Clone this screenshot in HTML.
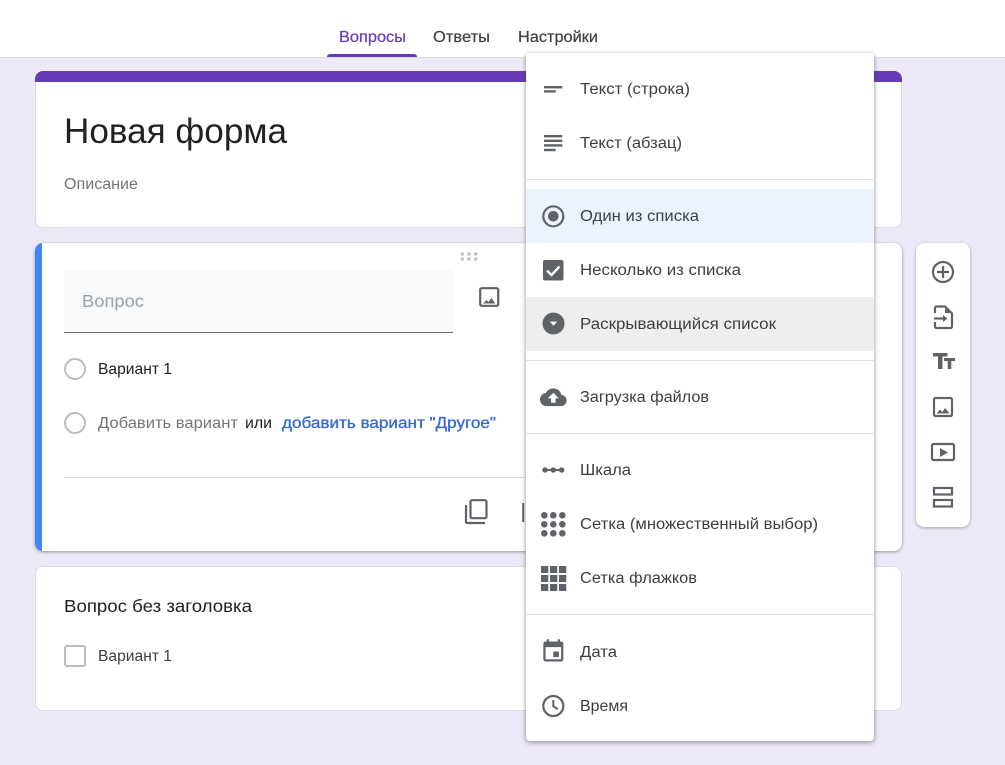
<!DOCTYPE html>
<html lang="ru"><head><meta charset="utf-8"><title>Новая форма</title>
<style>
html,body{margin:0;padding:0;width:1005px;height:765px;overflow:hidden;background:#eee9f8}
body{position:relative;font-family:"Liberation Sans","Noto Sans CJK SC",sans-serif}
.a{position:absolute;box-sizing:border-box}
svg{position:absolute;left:0;top:0}
text{font-family:"Liberation Sans","Noto Sans CJK SC",sans-serif;white-space:pre}
.m text{font-size:15.5px;fill:#3c4043}
</style></head><body>
<div class="a" style="left:0;top:0;width:1005px;height:58px;background:#fff;border-bottom:1px solid #dadce0"></div>
<div class="a" style="left:327px;top:54px;width:90px;height:3px;background:#673ab7;border-radius:3px 3px 0 0"></div>
<div class="a" style="left:35px;top:71px;width:867px;height:157px;background:#fff;border:1px solid #dadce0;border-radius:8px"></div>
<div class="a" style="left:35px;top:71px;width:867px;height:11px;background:#673ab7;border-radius:8px 8px 0 0"></div>
<div class="a" style="left:35px;top:243px;width:867px;height:308px;background:#fff;border-radius:8px;overflow:hidden;box-shadow:0 1px 3px rgba(60,64,67,.55)"><div style="width:7px;height:100%;background:#4285f4"></div></div>
<div class="a" style="left:35px;top:566px;width:867px;height:145px;background:#fff;border:1px solid #dadce0;border-radius:8px"></div>
<div class="a" style="left:916px;top:243px;width:54px;height:284px;background:#fff;border-radius:8px;box-shadow:0 1px 3px rgba(60,64,67,.45)"></div>
<div class="a" style="left:64px;top:270px;width:389px;height:63px;background:#f8f9fa;border-bottom:1px solid #70757a;border-radius:4px 4px 0 0"></div>

<svg width="1005" height="765" viewBox="0 0 1005 765">
<g font-size="15.5">
<text x="339" y="42" textLength="67" lengthAdjust="spacingAndGlyphs" fill="#673ab7" stroke="#673ab7" stroke-width=".2">Вопросы</text>
<text x="433" y="42" textLength="57" lengthAdjust="spacingAndGlyphs" fill="#3c4043" stroke="#3c4043" stroke-width=".2">Ответы</text>
<text x="518" y="42" textLength="80" lengthAdjust="spacingAndGlyphs" fill="#3c4043" stroke="#3c4043" stroke-width=".2">Настройки</text>
</g>
<text x="64" y="143" font-size="35.5" textLength="223" lengthAdjust="spacingAndGlyphs" fill="#202124">Новая форма</text>
<text x="64" y="189" font-size="15.5" textLength="74" lengthAdjust="spacingAndGlyphs" fill="#70757a">Описание</text>
<text x="82" y="307" font-size="17.5" textLength="62" lengthAdjust="spacingAndGlyphs" fill="#9aa0a6">Вопрос</text>
<g fill="#bdc1c6"><circle cx="462.3" cy="254" r="1.8"/><circle cx="469" cy="254" r="1.8"/><circle cx="475.7" cy="254" r="1.8"/><circle cx="462.3" cy="259" r="1.8"/><circle cx="469" cy="259" r="1.8"/><circle cx="475.7" cy="259" r="1.8"/></g>
<rect x="480.200" y="288.200" width="18" height="17.600" rx="1.5" fill="none" stroke="#5f6368" stroke-width="2.200"/>
<path d="M483 303.500l3.500-3.500 2 2 3-4 3.700 5.500z" fill="#5f6368"/>
<circle cx="75" cy="369" r="10" fill="none" stroke="#bdbdbd" stroke-width="2"/>
<circle cx="75" cy="423" r="10" fill="none" stroke="#bdbdbd" stroke-width="2"/>
<text x="98" y="374" font-size="15.5" textLength="74" lengthAdjust="spacingAndGlyphs" fill="#202124">Вариант 1</text>
<text x="98" y="428" font-size="15.5" textLength="140" lengthAdjust="spacingAndGlyphs" fill="#70757a">Добавить вариант</text>
<text x="245" y="428" font-size="15.5" textLength="27" lengthAdjust="spacingAndGlyphs" fill="#202124">или</text>
<text x="282" y="428" font-size="15.5" textLength="214" lengthAdjust="spacingAndGlyphs" fill="#3367d6" stroke="#3367d6" stroke-width=".3">добавить вариант "Другое"</text>
<rect x="64" y="477" width="462" height="1" fill="#dadce0"/>
<rect x="470.500" y="500.200" width="16" height="18" rx="1.500" fill="none" stroke="#5f6368" stroke-width="2.200"/>
<path d="M466 505v17a1.500 1.500 0 0 0 1.500 1h17.500" fill="none" stroke="#5f6368" stroke-width="2.200"/>
<path d="M523.200 503v19" fill="none" stroke="#5f6368" stroke-width="2"/>
<text x="64" y="612" font-size="17.5" textLength="188" lengthAdjust="spacingAndGlyphs" fill="#202124">Вопрос без заголовка</text>
<rect x="65" y="646" width="20" height="20" rx="2" fill="none" stroke="#bdbdbd" stroke-width="2"/>
<text x="98" y="661" font-size="15.5" textLength="74" lengthAdjust="spacingAndGlyphs" fill="#3c4043">Вариант 1</text>

<g fill="none" stroke="#5f6368" stroke-width="2.200">
<circle cx="943" cy="272" r="10"/><path d="M943 266v12M937 272h12"/>
<path d="M935 313v-5a1.500 1.500 0 0 1 1.500-1.500h8.500l7 7v13a1.500 1.500 0 0 1-1.500 1.500h-14a1.500 1.500 0 0 1-1.500-1.500v-4.500"/>
<path d="M934 318.500h11"/>
<rect x="934" y="398" width="18" height="18" rx="1.500"/>
<rect x="932" y="444" width="22" height="16" rx="1.500"/>
<rect x="934" y="488" width="18" height="6.500"/><rect x="934" y="500" width="18" height="6.500"/>
</g>
<g fill="#5f6368">
<path d="M945 306v7h7zM943 315l4.500 3.500-4.500 3.500z"/>
<path d="M933 353h14.500v3.500h-5v12.500h-4.500v-12.500h-5z"/>
<path d="M944 358h11v3h-3.700v8h-3.600v-8h-3.700z"/>
<path d="M936.500 413.500l3.500-4 2.500 2.500 2.500-4 4.500 5.500z"/>
<path d="M940 448l8 4.500-8 4.500z"/>
</g>
</svg>

<div class="a" style="left:526px;top:53px;width:348px;height:688px;background:#fff;border-radius:4px;box-shadow:0 1px 4px rgba(60,64,67,.4),0 2px 6px rgba(60,64,67,.2)"></div>
<svg class="m" width="1005" height="765" viewBox="0 0 1005 765">
<rect x="526" y="189" width="348" height="54" fill="#edf3fe"/>
<rect x="526" y="297" width="348" height="54" fill="#eeeeee"/>
<g fill="#e0e0e0"><rect x="526" y="179" width="348" height="1"/><rect x="526" y="360" width="348" height="1"/><rect x="526" y="433" width="348" height="1"/><rect x="526" y="614" width="348" height="1"/></g>
<text x="580" y="94" textLength="110" lengthAdjust="spacingAndGlyphs">Текст (строка)</text>
<text x="580" y="148" textLength="102" lengthAdjust="spacingAndGlyphs">Текст (абзац)</text>
<text x="580" y="221" textLength="119" lengthAdjust="spacingAndGlyphs">Один из списка</text>
<text x="580" y="275" textLength="161" lengthAdjust="spacingAndGlyphs">Несколько из списка</text>
<text x="580" y="329" textLength="196" lengthAdjust="spacingAndGlyphs">Раскрывающийся список</text>
<text x="580" y="402" textLength="129" lengthAdjust="spacingAndGlyphs">Загрузка файлов</text>
<text x="580" y="475" textLength="51" lengthAdjust="spacingAndGlyphs">Шкала</text>
<text x="580" y="529" textLength="238" lengthAdjust="spacingAndGlyphs">Сетка (множественный выбор)</text>
<text x="580" y="583" textLength="117" lengthAdjust="spacingAndGlyphs">Сетка флажков</text>
<text x="580" y="657" textLength="37" lengthAdjust="spacingAndGlyphs">Дата</text>
<text x="580" y="711" textLength="48" lengthAdjust="spacingAndGlyphs">Время</text>
<g fill="#5f6368">
<rect x="544" y="86" width="18.300" height="2.400"/><rect x="544" y="90.200" width="11.700" height="2.400"/>
<rect x="544" y="135" width="18.300" height="2.400"/><rect x="544" y="139.600" width="18.300" height="2.400"/><rect x="544" y="144.200" width="18.300" height="2.400"/><rect x="544" y="148.800" width="11.700" height="2.400"/>
<circle cx="553.300" cy="216.300" r="5.300"/>
<rect x="543" y="260" width="20.500" height="20.500" rx="2"/>
<circle cx="553.500" cy="323.500" r="11"/>
<path transform="translate(540 383.900) scale(1.110)" d="M19.350 10.040C18.670 6.590 15.640 4 12 4 9.110 4 6.600 5.640 5.350 8.040 2.340 8.360 0 10.910 0 14c0 3.310 2.690 6 6 6h13c2.760 0 5-2.240 5-5 0-2.640-2.050-4.780-4.650-4.960zM14 13v4h-4v-4H7l5-5 5 5h-3z"/>
<rect x="545" y="469" width="17" height="2"/><circle cx="545" cy="470" r="2.700"/><circle cx="553.300" cy="470" r="2.700"/><circle cx="561.700" cy="470" r="2.700"/>
<g><circle cx="544.300" cy="515.300" r="3.300"/><circle cx="553.300" cy="515.300" r="3.300"/><circle cx="562.300" cy="515.300" r="3.300"/><circle cx="544.300" cy="524.300" r="3.300"/><circle cx="553.300" cy="524.300" r="3.300"/><circle cx="562.300" cy="524.300" r="3.300"/><circle cx="544.300" cy="533.300" r="3.300"/><circle cx="553.300" cy="533.300" r="3.300"/><circle cx="562.300" cy="533.300" r="3.300"/></g>
<g><rect x="541" y="566" width="7.300" height="7"/><rect x="550" y="566" width="7.300" height="7"/><rect x="559" y="566" width="7.300" height="7"/><rect x="541" y="575" width="7.300" height="7"/><rect x="550" y="575" width="7.300" height="7"/><rect x="559" y="575" width="7.300" height="7"/><rect x="541" y="584" width="7.300" height="7"/><rect x="550" y="584" width="7.300" height="7"/><rect x="559" y="584" width="7.300" height="7"/></g>
<path transform="translate(540 638.200) scale(1.110)" d="M17 12h-5v5h5v-5zM16 1v2H8V1H6v2H5c-1.110 0-1.990.900-1.990 2L3 19c0 1.100.890 2 2 2h14c1.100 0 2-.900 2-2V5c0-1.100-.900-2-2-2h-1V1h-2zm3 18H5V8h14v11z"/>
</g>
<circle cx="553.300" cy="216.300" r="10" fill="none" stroke="#5f6368" stroke-width="2.200"/>
<path d="M547 270.500l4.500 4.500 8-8.500" fill="none" stroke="#fff" stroke-width="2.400"/>
<path d="M549.800 321.600h7.400l-3.700 4.200z" fill="#fff"/>
<circle cx="553.300" cy="706" r="10" fill="none" stroke="#5f6368" stroke-width="2.200"/>
<path d="M553.300 700v6.300l4.600 2.800" fill="none" stroke="#5f6368" stroke-width="2"/>
</svg>
</body></html>
